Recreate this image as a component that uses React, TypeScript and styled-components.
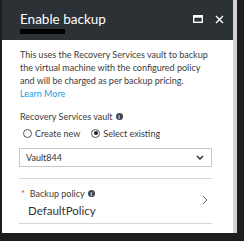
import styled, { createGlobalStyle } from "styled-components";

const GlobalStyle = createGlobalStyle`
  html, body {
    margin: 0;
    padding: 0;
  }
  body {
    width: 244px;
    height: 241px;
    overflow: hidden;
    background: #1d1d1d;
    font-family: Lato, "Open Sans", sans-serif;
  }
`;

const Frame = styled.div`
  width: 244px;
  height: 241px;
  box-sizing: border-box;
  padding: 0 7px 8px 2px;
  background: #1d1d1d;
  display: flex;
`;

const Blade = styled.div`
  flex: 1;
  display: flex;
  flex-direction: column;
  border-right: 4px solid #d3d3d6;
  background: #fff;
`;

const Header = styled.div`
  height: 40px;
  flex: none;
  background: #2c3136;
  display: flex;
  align-items: flex-start;
  padding: 0 9px 0 18px;
  box-sizing: border-box;
`;

const TitleBlock = styled.div`
  flex: 1;
  padding-top: 10px;
`;

const Title = styled.h1`
  margin: 0;
  font-size: 13.5px;
  font-weight: 400;
  color: #ffffff;
  line-height: 18px;
`;

const Redacted = styled.div`
  width: 45px;
  height: 5px;
  margin-top: 1px;
  background: #000;
`;

const Controls = styled.div`
  display: flex;
  gap: 12px;
  padding-top: 15px;
`;

const Body = styled.div`
  flex: 1;
  padding: 8px 21px 0 17px;
`;

const Para = styled.p`
  margin: 0;
  font-size: 9px;
  line-height: 13px;
  color: #3b3b3b;
  white-space: nowrap;
  padding-left: 1px;
`;

const Link = styled.a`
  color: #1aa1e1;
  text-decoration: none;
`;

const Label = styled.div<{ $indent?: boolean }>`
  margin-top: ${(p) => (p.$indent ? "7.5px" : "9.5px")};
  padding-left: ${(p) => (p.$indent ? "2px" : "1px")};
  font-size: 9px;
  line-height: 13px;
  color: #3b3b3b;
  display: flex;
  align-items: center;
  gap: 3px;
`;

const Star = styled.span`
  color: #e0303a;
  font-size: 9px;
  margin-right: 2px;
`;

const Info = styled.span`
  width: 7px;
  height: 7px;
  border-radius: 50%;
  background: #444;
  color: #fff;
  font-size: 6px;
  line-height: 7px;
  text-align: center;
  font-weight: 700;
`;

const RadioRow = styled.div`
  display: flex;
  gap: 11px;
  height: 12px;
  margin-top: 4.5px;
  padding-left: 4px;
`;

const RadioItem = styled.label`
  display: flex;
  align-items: center;
  gap: 3px;
  font-size: 9px;
  color: #3b3b3b;
`;

const Circle = styled.span<{ $on?: boolean }>`
  width: 7px;
  height: 7px;
  border: 1px solid #555;
  border-radius: 50%;
  display: flex;
  align-items: center;
  justify-content: center;
  &::after {
    content: "";
    width: 4px;
    height: 4px;
    border-radius: 50%;
    background: ${(p) => (p.$on ? "#222" : "transparent")};
  }
`;

const Select = styled.div`
  margin-top: 9px;
  height: 17px;
  border: 1px solid #c8c8c8;
  display: flex;
  align-items: center;
  justify-content: space-between;
  padding: 0 7px 0 6px;
  font-size: 9px;
  color: #333;
`;

const Divider = styled.div<{ $gap: number }>`
  height: 1px;
  margin-top: ${(p) => p.$gap}px;
  background: #d6d6d6;
`;

const PolicyRow = styled.div`
  display: flex;
  align-items: flex-start;
  justify-content: space-between;
  padding-right: 4px;
`;

const Chevron = styled.svg`
  margin-top: 16px;
`;

const PolicyValue = styled.div`
  padding-left: 9px;
  margin-top: 3.5px;
  font-size: 11.5px;
  line-height: 16px;
  color: #333;
`;

export default function App() {
  return (
    <>
      <GlobalStyle />
      <Frame>
        <Blade>
          <Header>
            <TitleBlock>
              <Title>Enable backup</Title>
              <Redacted />
            </TitleBlock>
            <Controls>
              <svg width="10" height="8" viewBox="0 0 10 8">
                <rect x="0.7" y="0.7" width="8.6" height="6.6" fill="none" stroke="#fff" strokeWidth="1.4" />
                <rect x="0.7" y="0.7" width="8.6" height="2" fill="#fff" />
              </svg>
              <svg width="9" height="9" viewBox="0 0 9 9">
                <path d="M1 1L8 8M8 1L1 8" stroke="#fff" strokeWidth="1.4" />
              </svg>
            </Controls>
          </Header>
          <Body>
            <Para>This uses the Recovery Services vault to backup</Para>
            <Para>the virtual machine with the configured policy</Para>
            <Para>and will be charged as per backup pricing.</Para>
            <Para>
              <Link href="#">Learn More</Link>
            </Para>
            <Label>
              Recovery Services vault <Info>i</Info>
            </Label>
            <RadioRow>
              <RadioItem>
                <Circle />
                Create new
              </RadioItem>
              <RadioItem>
                <Circle $on />
                Select existing
              </RadioItem>
            </RadioRow>
            <Select>
              Vault844
              <svg width="8" height="5" viewBox="0 0 8 5">
                <path d="M1 1L4 4L7 1" fill="none" stroke="#333" strokeWidth="1.5" />
              </svg>
            </Select>
            <Divider $gap={11} />
            <PolicyRow>
              <div>
                <Label $indent>
                  <Star>*</Star>Backup policy <Info>i</Info>
                </Label>
                <PolicyValue>DefaultPolicy</PolicyValue>
              </div>
              <Chevron width="6" height="10" viewBox="0 0 6 10">
                <path d="M1 1L5 5L1 9" fill="none" stroke="#666" strokeWidth="1" />
              </Chevron>
            </PolicyRow>
            <Divider $gap={4} />
          </Body>
        </Blade>
      </Frame>
    </>
  );
}
